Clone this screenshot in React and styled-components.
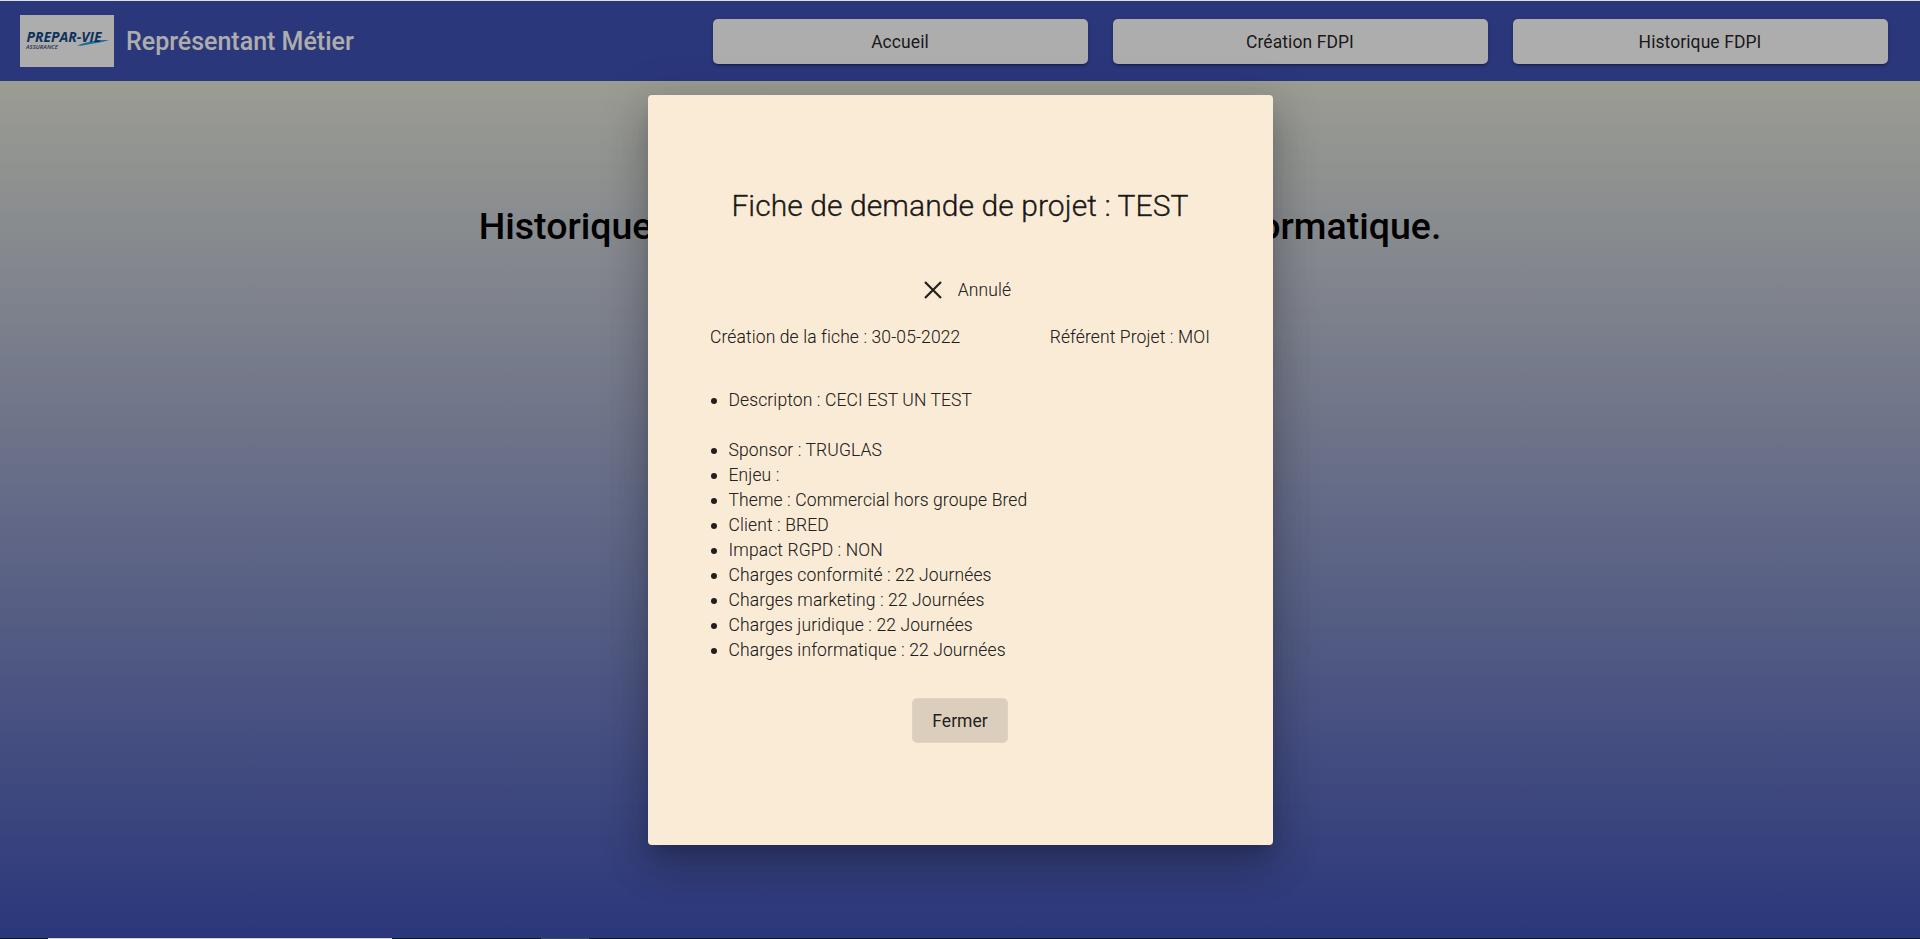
import React from "react";
import styled, { createGlobalStyle } from "styled-components";

const Global = createGlobalStyle`
  * { box-sizing: border-box; }
  body { margin: 0; font-family: Roboto, "Liberation Sans", sans-serif; overflow: hidden; }
`;
const Screen = styled.div`
  position: relative;
  display: flex;
  flex-direction: column;
  height: 939px;
  border-top: 1px solid #dee1e6;
  background: linear-gradient(beige, #3f51b5);
`;
const Toolbar = styled.header`
  display: flex;
  align-items: center;
  height: 80px;
  padding: 0 32px 0 20px;
  background: #3f51b5;
  color: #fff;
`;
const LogoBox = styled.div`
  width: 94px;
  height: 52px;
  margin-right: 12px;
  background: #fff;
`;
const Brand = styled.h1`
  margin: 0;
  padding-top: 1px;
  flex: 1;
  font-size: 25px;
  font-weight: 500;
  line-height: 32px;
`;
const Nav = styled.nav`
  display: flex;
  gap: 25px;
`;
const NavButton = styled.button`
  width: 375px;
  height: 45px;
  padding: 1px 1px 0 0;
  border: 0;
  border-radius: 5px;
  background: #fff;
  color: rgba(0, 0, 0, 0.87);
  font: 400 17.5px/44px Roboto, sans-serif;
  letter-spacing: 0.08px;
  box-shadow: 0 3px 1px -2px rgba(0, 0, 0, 0.2), 0 2px 2px rgba(0, 0, 0, 0.14), 0 1px 5px rgba(0, 0, 0, 0.12);
`;
const Page = styled.main`
  flex: 1;
  padding-top: 120px;
`;
const PageTitle = styled.h2`
  margin: 0;
  text-align: center;
  font-size: 37.5px;
  font-weight: 500;
  line-height: 50px;
  white-space: nowrap;
`;
const Taskbar = styled.footer`
  position: relative;
  z-index: 2;
  display: flex;
  height: 1px;
  background: #06172b;
`;
const TaskItem = styled.div`
  width: ${(p) => p.$w}px;
  margin-left: ${(p) => p.$gap}px;
  background: ${(p) => p.$c};
`;
const Backdrop = styled.div`
  position: absolute;
  inset: 0 0 1px;
  display: flex;
  justify-content: center;
  align-items: center;
  padding-top: 1px;
  background: rgba(0, 0, 0, 0.32);
`;
const Dialog = styled.section`
  width: 625px;
  height: 750px;
  padding: 90px 62.5px 0;
  border-radius: 4px;
  background: #faebd7;
  color: rgba(0, 0, 0, 0.87);
  font-weight: 300;
  font-size: 17.5px;
  letter-spacing: 0.11px;
  line-height: 25px;
  -webkit-text-stroke: 0.15px rgba(0, 0, 0, 0.87);
  box-shadow: 0 11px 15px -7px rgba(0, 0, 0, 0.2), 0 24px 38px 3px rgba(0, 0, 0, 0.14), 0 9px 46px 8px rgba(0, 0, 0, 0.12);
`;
const DialogTitle = styled.h3`
  margin: 0 0 52px;
  text-align: center;
  font-size: 30px;
  font-weight: 300;
  letter-spacing: 0.08px;
  line-height: 42px;
  -webkit-text-stroke-width: 0.4px;
`;
const Status = styled.div`
  display: flex;
  justify-content: center;
  align-items: center;
  gap: 16px;
  padding-left: 15px;
  height: 22px;
`;
const CancelIcon = styled.svg`
  width: 18px;
  height: 18px;
  margin-bottom: 1px;
  stroke: #20201e;
  stroke-width: 2.2;
`;
const Meta = styled.div`
  display: flex;
  justify-content: space-between;
  margin-top: 24px;
`;
const List = styled.ul`
  margin: ${(p) => p.$top}px 0 0;
  padding-left: 18.5px;

  li {
    height: 25px;
  }
  li::marker {
    font-size: 18px;
  }
`;
const Actions = styled.div`
  display: flex;
  justify-content: center;
  margin-top: 36px;
`;
const CloseButton = styled.button`
  width: 96px;
  height: 45px;
  padding: 1px 0 0;
  border: 1px solid rgba(0, 0, 0, 0.1);
  border-radius: 5px;
  background: rgba(0, 0, 0, 0.12);
  background-clip: padding-box;
  color: rgba(0, 0, 0, 0.87);
  font: 400 17.5px/42px Roboto, sans-serif;
  -webkit-text-stroke-width: 0;
`;

const Logo = () => (
  <svg width="94" height="52" viewBox="0 0 94 52">
    <path d="M57 30.5 C66 27 76 25 89 25 C80 28 70 29 61 30.8 Z" fill="#2a9fd8" />
    <text x="6.5" y="26.5" textLength="75" lengthAdjust="spacingAndGlyphs" fontFamily="Open Sans" fontSize="13.8" fontWeight="700" fontStyle="italic" fill="#124a8c">PREPAR-VIE</text>
    <text x="6" y="34" textLength="32" lengthAdjust="spacingAndGlyphs" fontFamily="Open Sans" fontSize="5.6" fontStyle="italic" fontWeight="600" fill="#2a4a70">ASSURANCE</text>
  </svg>
);

const details = [
  "Sponsor : TRUGLAS",
  "Enjeu :",
  "Theme : Commercial hors groupe Bred",
  "Client : BRED",
  "Impact RGPD : NON",
  "Charges conformité : 22 Journées",
  "Charges marketing : 22 Journées",
  "Charges juridique : 22 Journées",
  "Charges informatique : 22 Journées",
];

export default function App() {
  return (
    <Screen>
      <Global />
      <Toolbar>
        <LogoBox><Logo /></LogoBox>
        <Brand>Représentant Métier</Brand>
        <Nav>
          {["Accueil", "Création FDPI", "Historique FDPI"].map((t) => <NavButton key={t}>{t}</NavButton>)}
        </Nav>
      </Toolbar>
      <Page>
        <PageTitle>Historique des fiches de demande de projet informatique.</PageTitle>
      </Page>
      <Backdrop>
        <Dialog>
          <DialogTitle>Fiche de demande de projet : TEST</DialogTitle>
          <Status>
            <CancelIcon viewBox="0 0 18 18"><path d="M1 1 17 17M17 1 1 17" /></CancelIcon>
            Annulé
          </Status>
          <Meta><span>Création de la fiche : 30-05-2022</span><span>Référent Projet : MOI</span></Meta>
          <List $top={37}><li>Descripton : CECI EST UN TEST</li></List>
          <List $top={25}>{details.map((t) => <li key={t}>{t}</li>)}</List>
          <Actions><CloseButton>Fermer</CloseButton></Actions>
        </Dialog>
      </Backdrop>
      <Taskbar>
        <TaskItem $gap={48} $w={344} $c="#d3d2dc" />
        <TaskItem $gap={149} $w={48} $c="#3a4560" />
      </Taskbar>
    </Screen>
  );
}
